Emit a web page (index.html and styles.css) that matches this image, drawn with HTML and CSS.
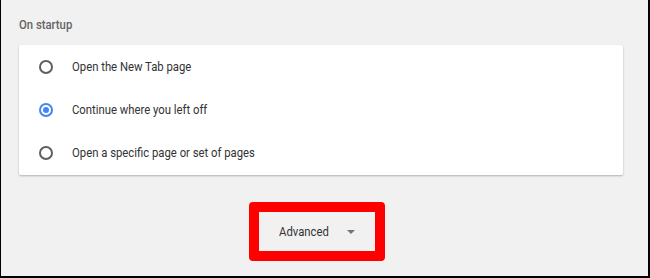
FILE: index.html
```html
<!DOCTYPE html>
<html>
<head>
<meta charset="utf-8">
<link rel="stylesheet" href="styles.css">
</head>
<body>
<div class="frame">
  <div class="section-title"><span class="narrow">On startup</span></div>
  <div class="card">
    <div class="row">
      <span class="radio"></span>
      <span class="label narrow">Open the New Tab page</span>
    </div>
    <div class="row">
      <span class="radio checked"></span>
      <span class="label narrow">Continue where you left off</span>
    </div>
    <div class="row">
      <span class="radio"></span>
      <span class="label narrow">Open a specific page or set of pages</span>
    </div>
  </div>
  <div class="adv-row">
    <div class="adv-btn">
      <span class="adv-text narrow">Advanced</span>
      <span class="arrow"></span>
    </div>
  </div>
</div>
</body>
</html>
```

FILE: styles.css
```css
* { box-sizing: border-box; }
html, body { margin: 0; padding: 0; }
body {
  width: 650px;
  height: 278px;
  overflow: hidden;
  font-family: Roboto, "Liberation Sans", sans-serif;
}
.frame {
  width: 650px;
  height: 278px;
  background: #f1f1f1;
  border-left: 1px solid #000;
  border-right: 2px solid #000;
  border-bottom: 2px solid #000;
  padding: 15px 0 0 18px;
}
.narrow {
  display: inline-block;
  transform: scaleX(0.87);
  transform-origin: left center;
}
.section-title {
  font-size: 13px;
  font-weight: 500;
  color: #646464;
  line-height: 20px;
  height: 30px;
}
.card {
  width: 604px;
  height: 130px;
  background: #fff;
  border-radius: 2px;
  box-shadow: 0 1px 2px rgba(0,0,0,0.2), 0 1px 3px rgba(0,0,0,0.08);
  display: flex;
  flex-direction: column;
}
.row {
  height: 43px;
  display: flex;
  align-items: center;
  padding-left: 20px;
}
.radio {
  width: 14px;
  height: 14px;
  border: 2px solid #5f5f5f;
  border-radius: 50%;
  margin-right: 19px;
  flex: none;
  display: flex;
  align-items: center;
  justify-content: center;
}
.radio.checked {
  border-color: #4285f4;
}
.radio.checked::after {
  content: "";
  width: 6px;
  height: 6px;
  border-radius: 50%;
  background: #4285f4;
}
.label {
  font-size: 13px;
  color: #333;
}
.adv-row {
  display: flex;
  justify-content: center;
  padding-right: 33px;
  margin-top: 27px;
}
.adv-btn {
  display: flex;
  align-items: center;
  height: 59px;
  width: 136px;
  border: 10px solid #ff0000;
  border-radius: 4px;
  padding-left: 20px;
}
.adv-text {
  font-size: 13px;
  color: #333;
}
.arrow {
  width: 0;
  height: 0;
  border-left: 4px solid transparent;
  border-right: 4px solid transparent;
  border-top: 4px solid #757575;
  margin-left: 11px;
  margin-top: 1px;
}
```
